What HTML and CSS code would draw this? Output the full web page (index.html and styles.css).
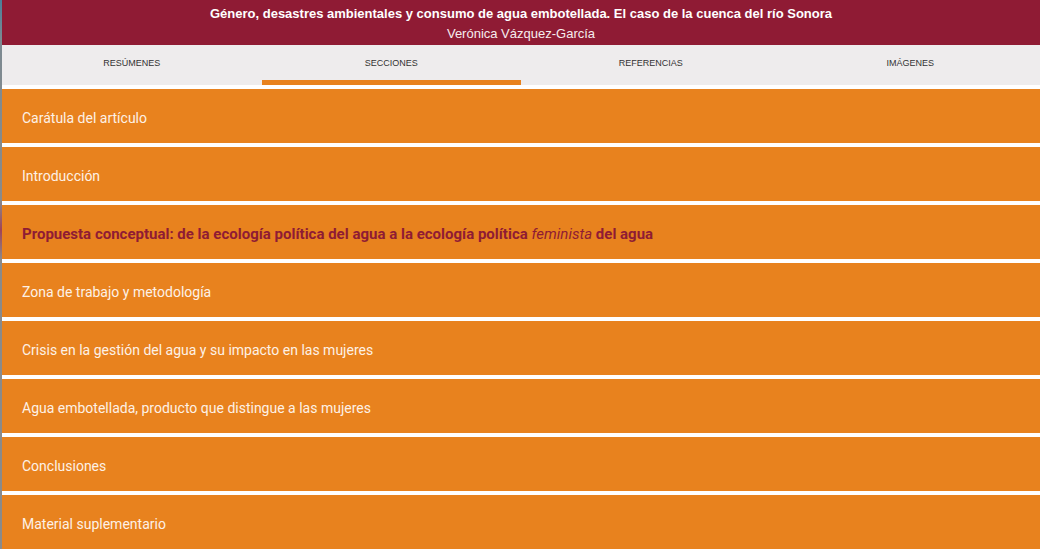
FILE: index.html
```html
<!DOCTYPE html>
<html lang="es">
<head>
<meta charset="utf-8">
<title>Secciones</title>
<link rel="stylesheet" href="styles.css">
</head>
<body>
<div class="page">
  <header class="header">
    <div class="title">Género, desastres ambientales y consumo de agua embotellada. El caso de la cuenca del río Sonora</div>
    <div class="author">Verónica Vázquez-García</div>
  </header>
  <nav class="tabs">
    <div class="tab">RESÚMENES</div>
    <div class="tab active">SECCIONES</div>
    <div class="tab">REFERENCIAS</div>
    <div class="tab">IMÁGENES</div>
  </nav>
  <ul class="sections">
    <li class="item">Carátula del artículo</li>
    <li class="item">Introducción</li>
    <li class="item current">Propuesta conceptual: de la ecología política del agua a la ecología política&nbsp;<em>feminista</em>&nbsp;del agua</li>
    <li class="item">Zona de trabajo y metodología</li>
    <li class="item">Crisis en la gestión del agua y su impacto en las mujeres</li>
    <li class="item">Agua embotellada, producto que distingue a las mujeres</li>
    <li class="item">Conclusiones</li>
    <li class="item">Material suplementario</li>
  </ul>
</div>
</body>
</html>
```
FILE: styles.css
```css
html, body {
  margin: 0;
  padding: 0;
}
body {
  background: linear-gradient(to bottom, #4a7f9a 0, #7c8a92 40px, #8a8a8a 200px, #a04456 230px, #8a8a8a 260px, #8a8a8a 100%);
  background-size: 2px 100%;
  background-repeat: no-repeat;
  background-color: #ffffff;
  overflow: hidden;
}
.page {
  margin-left: 2px;
  background: #ffffff;
  font-family: "Liberation Sans", Arial, sans-serif;
}
.header {
  background: #8f1b34;
  color: #ffffff;
  text-align: center;
  padding: 4px 0 2px;
  height: 39px;
}
.title {
  font-weight: bold;
  font-size: 13px;
  line-height: 19px;
}
.author {
  font-size: 13px;
  line-height: 19px;
  padding-top: 1px;
  color: #f6ecee;
}
.tabs {
  display: grid;
  grid-template-columns: repeat(4, 1fr);
  background: #eeeced;
  height: 40px;
}
.tab {
  font-size: 9px;
  color: #333333;
  display: flex;
  align-items: center;
  justify-content: center;
  padding-top: 1px;
  border-bottom: 5px solid transparent;
}
.tab.active {
  border-bottom-color: #e8821e;
}
.sections {
  list-style: none;
  margin: 4px 0 0;
  padding: 0;
  display: flex;
  flex-direction: column;
  gap: 4px;
}
.item {
  background: #e8821e;
  height: 54px;
  display: flex;
  align-items: center;
  padding: 3px 20px 0;
  box-sizing: border-box;
  font-family: Roboto, "Liberation Sans", sans-serif;
  font-size: 14px;
  color: #fdf1e6;
  white-space: pre;
}
.item em {
  font-style: italic;
  font-weight: normal;
}
.item.current {
  color: #8f1b34;
  font-weight: bold;
  font-size: 15px;
}
```
